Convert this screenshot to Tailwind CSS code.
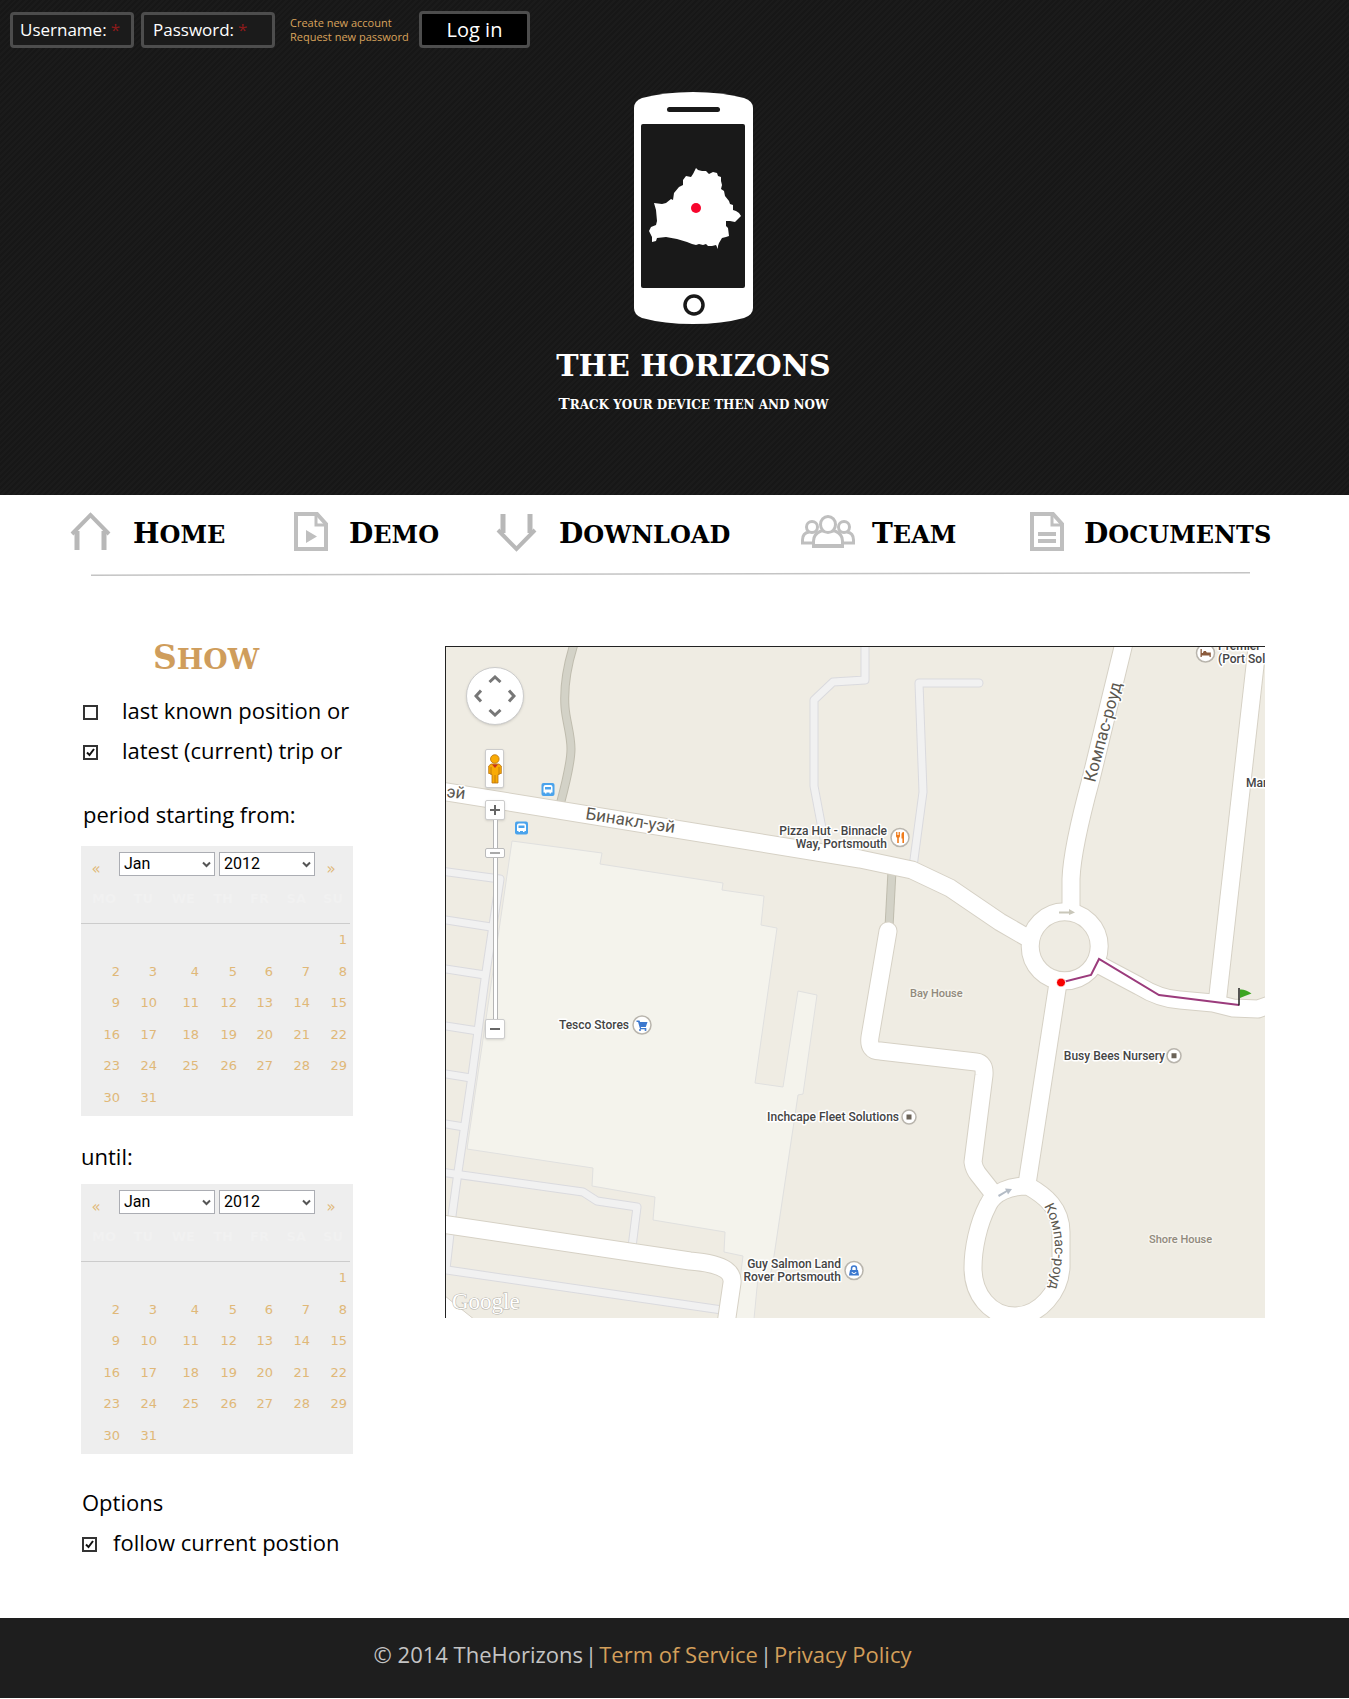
<!DOCTYPE html>
<html lang="en">
<head>
<meta charset="utf-8">
<meta name="viewport" content="width=device-width, initial-scale=1">
<title>The Horizons</title>
<script src="https://cdn.jsdelivr.net/npm/@tailwindcss/browser@4"></script>
</head>
<body class="bg-white font-['Open_Sans',sans-serif] text-black">

<header class="bg-[repeating-linear-gradient(135deg,#171717_0_2px,#1b1b1b_2px_4px)] pb-[78px] pt-[11px] text-white">
  <form class="flex items-center pl-[10px]">
    <label class="flex h-9 w-[124px] items-center gap-1 rounded-[4px] border-3 border-[#4d4d4d] bg-[#1b1b1b] pl-[7px] text-[17px]">Username: <span class="text-[#8c1a1a]">*</span><input type="text" name="user" class="w-0 flex-1 bg-transparent outline-none"></label>
    <label class="ml-[7px] flex h-9 w-[134px] items-center gap-1 rounded-[4px] border-3 border-[#4d4d4d] bg-[#1b1b1b] pl-[9px] text-[17px]">Password: <span class="text-[#8c1a1a]">*</span><input type="password" name="pass" class="w-0 flex-1 bg-transparent outline-none"></label>
    <div class="ml-[15px] flex w-[129px] flex-col text-[11px] leading-[14px] text-[#d9a35c]">
      <a href="#">Create new account</a>
      <a href="#">Request new password</a>
    </div>
    <button type="submit" class="h-[37px] w-[111px] rounded-[4px] border-3 border-[#4d4d4d] bg-black text-[20px] leading-none">Log in</button>
  </form>

  <div class="mt-11 flex flex-col items-center pl-[38px]">
    <svg class="h-[232px] w-[119px]" viewBox="0 0 119 232" aria-label="The Horizons logo" role="img">
      <path fill="#fff" d="M0 16Q0 9 8 6Q30 0 59 0T110 6Q119 9 119 16V216Q119 223 110 226Q88 232 59 232T8 226Q0 223 0 216Z"/>
      <rect x="33" y="15" width="53" height="5" rx="2.5" fill="#191919"/>
      <rect x="7" y="32" width="104" height="164" rx="2" fill="#191919"/>
      <circle cx="60" cy="213" r="9" fill="#fff" stroke="#191919" stroke-width="3.5"/>
      <path fill="#fff" d="M62 76l2 2 4 1 4 0 3 3 4-2 4 1 1 3 3 1 0 4 1 4-1 4 3 2 1 5 4 5 1 3 3 1 0 5 3 1 3 2 2 3-2 2-4 4-5-1-4 0 0 5 2 2 1 8-3 1-4 1-3 5-1 3 0 3-2-4-4 1-4 0-2-2-3 1-4-1-3 1-4-1-5-2-10-3-11-2-9 1-1 3-4 1 0-5-3-6 2-4 5-2 1-4-1-11-2-7 8 1 4-1 5-4 2 1 1-7 5-6 4-2 0-5 3-4 5 1 2-3z"/>
      <circle cx="62" cy="116" r="5" fill="#f7052d"/>
    </svg>
    <h1 class="mt-6 font-['DejaVu_Serif',serif] text-[30px] leading-9 font-bold">THE HORIZONS</h1>
    <p class="mt-2 font-['DejaVu_Serif',serif] text-[12px] leading-6 font-bold uppercase first-letter:text-[15px]">Track your device then and now</p>
  </div>
</header>

<nav class="grid grid-cols-[224fr_202fr_305fr_229fr_249fr] px-[70px] pt-[17px] font-['DejaVu_Serif',serif] text-[24px] leading-8 font-bold uppercase">
  <a href="#" class="flex items-center gap-[21px]">
    <svg class="h-10 w-[42px] shrink-0" viewBox="0 0 42 40" fill="none" stroke="#b8b8b8" stroke-width="5"><path d="M7 38V19M34 38V19"/><path stroke-width="4" d="M2 22L20.500 3L39 22"/></svg><span class="block pt-1 first-letter:text-[28px]">Home</span></a>
  <a href="#" class="flex items-center gap-[21px]">
    <svg class="h-10 w-[34px] shrink-0" viewBox="0 0 34 40"><path fill="none" stroke="#bfbfbf" stroke-width="4" d="M2 2H23L32 12V37H2Z"/><path fill="none" stroke="#bfbfbf" stroke-width="3" d="M22 3V13H32"/><path fill="#bfbfbf" d="M12 18L23 24.500L12 31Z"/></svg><span class="block pt-1 first-letter:text-[28px]">Demo</span></a>
  <a href="#" class="flex items-center gap-[21px]">
    <svg class="h-10 w-[42px] shrink-0" viewBox="0 0 42 40" fill="none" stroke="#b8b8b8" stroke-width="5"><path d="M7 2V21M34 2V21"/><path stroke-width="4" d="M2 18L20.500 37L39 18"/></svg><span class="block pt-1 first-letter:text-[28px]">Download</span></a>
  <a href="#" class="flex items-center gap-[17px]">
    <svg class="h-10 w-[54px] shrink-0" viewBox="0 0 54 40" fill="none" stroke="#bfbfbf" stroke-width="3"><circle cx="11" cy="15" r="5.500"/><circle cx="43" cy="15" r="5.500"/><path d="M12 31H1.500V28Q1.500 21 8 20M42 31H52.500V28Q52.500 21 46 20"/><path fill="#fff" d="M12.500 34V29Q12.500 22 20 19H34Q41.500 22 41.500 29V34Z"/><path stroke-width="4" d="M11 34H43"/><ellipse cx="27" cy="12.500" rx="7.500" ry="8" fill="#fff"/></svg><span class="block pt-1 first-letter:text-[28px]">Team</span></a>
  <a href="#" class="flex items-center gap-[20px]">
    <svg class="h-10 w-[34px] shrink-0" viewBox="0 0 34 40"><path fill="none" stroke="#bfbfbf" stroke-width="4" d="M2 2H23L32 12V37H2Z"/><path fill="none" stroke="#bfbfbf" stroke-width="3" d="M22 3V13H32"/><path stroke="#bfbfbf" stroke-width="4" d="M8 22H26M8 29H26"/></svg><span class="block pt-1 first-letter:text-[28px]">Documents</span></a>
</nav>
<svg class="ml-[91px] mt-5 block h-1 w-[calc(100%-190px)]" viewBox="0 0 1159 4" preserveAspectRatio="none"><path stroke="#c4c4c4" stroke-width="1.500" d="M0 3.200L1159 .8"/></svg>

<main class="flex items-start gap-[92px] pb-14 pl-[81px] pr-[84px] pt-[70px]">
  <form class="w-[272px] shrink-0 text-[22px] leading-10">
    <h2 class="mb-[18px] pl-[72px] font-['DejaVu_Serif',serif] text-[28px] leading-6 font-bold text-[#cf9d5c] uppercase first-letter:text-[33px]">Show</h2>
    <label class="flex items-center gap-6 whitespace-nowrap pl-[2px]">
      <span class="mt-1 grid size-[15px] shrink-0"><input type="checkbox" class="peer col-start-1 row-start-1 size-[15px] appearance-none border-2 border-[#333]"><svg class="col-start-1 row-start-1 hidden size-[15px] peer-checked:block" viewBox="0 0 15 15"><path fill="none" stroke="#111" stroke-width="2" d="M4 7.500L6.500 10L11 4"/></svg></span>last known position or</label>
    <label class="flex items-center gap-6 whitespace-nowrap pl-[2px]">
      <span class="mt-1 grid size-[15px] shrink-0"><input type="checkbox" checked class="peer col-start-1 row-start-1 size-[15px] appearance-none border-2 border-[#333]"><svg class="col-start-1 row-start-1 hidden size-[15px] peer-checked:block" viewBox="0 0 15 15"><path fill="none" stroke="#111" stroke-width="2" d="M4 7.500L6.500 10L11 4"/></svg></span>latest (current) trip or</label>

    <h3 class="mt-6 pl-[2px]">period starting from:</h3>
    <div data-calendar="from" class="mt-3"></div>
    <h3 class="mt-5">until:</h3>
    <div data-calendar="until" class="mt-2"></div>

    <h3 class="mt-7 pl-[1px]">Options</h3>
    <label class="flex items-center gap-4 whitespace-nowrap pl-[1px]">
      <span class="mt-1 grid size-[15px] shrink-0"><input type="checkbox" checked class="peer col-start-1 row-start-1 size-[15px] appearance-none border-2 border-[#333]"><svg class="col-start-1 row-start-1 hidden size-[15px] peer-checked:block" viewBox="0 0 15 15"><path fill="none" stroke="#111" stroke-width="2" d="M4 7.500L6.500 10L11 4"/></svg></span>follow current postion</label>
  </form>

  <section class="relative min-w-0 flex-1 border-l border-t border-[#222]" aria-label="Map">
    <svg class="block h-auto w-full font-[Roboto,sans-serif]" viewBox="446 648 819 671">
      <rect x="445" y="647" width="820" height="672" fill="#efece3"/>
      <!-- store plot -->
      <path fill="#f4f3ec" stroke="#e0e0df" d="M512 842L602 854L600 865L723 884L722 891L764 897L761 926L777 929L755 1084L783 1088L798 992L817 996L803 1095L798 1096L774 1257L770 1278L758 1278L754 1320H735L743 1257L724 1253L725 1233L653 1221L655 1198L592 1187L593 1169L467 1150Z"/>
      <!-- footpaths -->
      <g fill="none" stroke-linejoin="round">
        <g stroke="#bfbcae" stroke-width="9"><path d="M574 645Q563 680 565 708C566 722 571 735 571 750Q571 765 560 806"/><path d="M892 872L889 928"/></g>
        <g stroke="#d3d2c7" stroke-width="7"><path d="M574 645Q563 680 565 708C566 722 571 735 571 750Q571 765 560 806"/><path d="M892 872L889 928"/></g>
      </g>
      <!-- minor roads -->
      <defs>
        <g id="minor" fill="none" stroke-linejoin="round">
          <path d="M440 872L500 880L485 980L472 1077L458 1173L452 1217L446 1270"/>
          <path d="M440 920L491 928M440 969L485 976M440 1026L478 1032M440 1074L471 1079M440 1124L464 1128"/>
          <path d="M440 1173L583 1193L597 1202L637 1208L632 1248M440 1270L722 1311"/>
          <path d="M865 640V681L833 683L814 701V787L824 840"/>
          <path stroke-linecap="round" d="M979 684H919L923 793L913 868"/>
        </g>
        <g id="major" fill="none" stroke-linejoin="round">
          <path d="M435 791L860 860L912 871L950 889L1000 923L1026 938"/>
          <circle cx="1064.700" cy="947.300" r="34.500"/>
          <path d="M1125 640L1091 780Q1072 850 1071 880V912"/>
          <path d="M1258 640L1217 1005"/>
          <path d="M1092 962L1139 987Q1160 1000 1180 1001L1213 1004L1233 1009L1258 1010L1272 1005"/>
          <path d="M1058 984L1027 1185"/>
          <path stroke-linecap="round" d="M888 932L870 1038Q868 1052 880 1052L976 1063Q985 1064 984 1076L973 1163Q974 1170 978 1175L993 1194"/>
          <path d="M1028 1187C1010 1187 994 1193 988 1206C978 1225 973 1250 973 1269C973 1295 990 1317 1015 1317C1040 1317 1060 1292 1061 1268V1233C1061 1210 1046 1197 1028 1187Z"/>
          <path d="M435 1224L690 1262Q716 1264 726 1271Q733 1276 732 1284L726 1325"/>
        </g>
      </defs>
      <use href="#minor" stroke="#dadade" stroke-width="9"/><use href="#minor" stroke="#f1f1f1" stroke-width="7"/>
      <use href="#major" stroke="#d6d1c5" stroke-width="19"/><use href="#major" stroke="#fff" stroke-width="17"/>
      <path fill="#fff" stroke="#d6d1c5" d="M440 1294L445 1297L475 1321H440Z"/>
      <!-- direction arrows -->
      <path fill="#c9c7ba" d="M1059 912.500H1069V910L1075 913.500L1069 916V914.500H1059Z"/>
      <path fill="#b4bcc6" d="M998 1196L1006 1191.500L1005 1189.500L1012 1190L1008 1195.500L1007 1193L999 1198Z"/>
      <!-- street names -->
      <g fill="#5b574f" stroke="#fff" stroke-width="3" stroke-linejoin="round" paint-order="stroke">
        <text font-size="17" transform="translate(585 820) rotate(9)">Бинакл-уэй</text>
        <text font-size="17" transform="translate(446 798) rotate(7)">эй</text>
        <text font-size="17" transform="translate(1095 784) rotate(-75)">Компас-роуд</text>
        <path id="loop-name" fill="none" stroke="none" d="M1044 1207Q1054 1225 1055 1247Q1055 1270 1047 1295"/>
        <text font-size="14"><textPath href="#loop-name">Компас-роуд</textPath></text>
      </g>
      <!-- places -->
      <g fill="#444" stroke="#fff" stroke-width="3" stroke-linejoin="round" paint-order="stroke" font-size="12" font-weight="500">
        <g text-anchor="end">
          <text x="887" y="836">Pizza Hut - Binnacle</text><text x="887" y="849">Way, Portsmouth</text>
          <text x="841" y="1269">Guy Salmon Land</text><text x="841" y="1282">Rover Portsmouth</text>
          <text x="629" y="1030">Tesco Stores</text><text x="899" y="1122">Inchcape Fleet Solutions</text><text x="1165" y="1061">Busy Bees Nursery</text>
        </g>
        <text x="1218" y="651">Premier</text><text x="1218" y="664">(Port Sol</text><text x="1246" y="788">Mar</text>
        <g fill="#918a7d" stroke="#f5f3ec" font-size="11"><text x="910" y="998">Bay House</text><text x="1149" y="1244">Shore House</text></g>
      </g>
      <g fill="#fff" stroke="#b9b5ad" stroke-width="1.500">
        <circle cx="900" cy="838.500" r="9"/><circle cx="642" cy="1026" r="9"/><circle cx="854" cy="1271.500" r="9"/><circle cx="1205.500" cy="654" r="9"/><circle cx="909" cy="1118" r="7"/><circle cx="1174" cy="1056.700" r="7"/>
      </g>
      <path fill="#6b6358" d="M906.500 1115.500h5v5h-5zM1171.500 1054.200h5v5h-5z"/>
      <path fill="#f07c1c" d="M896 833v4q0 1.500 1.200 1.700V844h1.600v-5.300q1.200-.2 1.200-1.700v-4h-.9v3h-.7v-3h-.8v3h-.7v-3zM901.500 835q0-2 2.500-2V844h-1.600v-4.500h-.9z"/>
      <path fill="#3b78cf" d="M636.500 1021.500h3l.6 1.500h7.400l-1.700 5h-5l.3 1h5.200v1.200h-6.200l-2-7.200h-1.600z"/><circle cx="640" cy="1031" r="1" fill="#3b78cf"/><circle cx="645.500" cy="1031" r="1" fill="#3b78cf"/>
      <path fill="#3b78cf" d="M850 1271h8l1 5.500h-10z"/><path fill="none" stroke="#3b78cf" stroke-width="1.500" d="M851.500 1271v-1.500a2.500 2.500 0 015 0v1.500"/><path fill="none" stroke="#fff" d="M852 1273a2 1.500 0 004 0"/>
      <path fill="#8a5a3c" d="M1200.500 650h1.300v4h1l1-2h2l1 1.500h4v4.500h-1.300v-1.500h-7.700v1.500h-1.300z"/>
      <!-- bus stops -->
      <g id="bus"><rect x="541.500" y="784" width="13" height="13" rx="2" fill="#4aa3ec"/><path fill="#fff" d="M543.500 793.500V788q0-2 2-2h5q2 0 2 2v5.500h-1.500v1h-1.500v-1h-3v1H545v-1z"/><path fill="#4aa3ec" d="M545 788h6v2.500h-6z"/></g>
      <use href="#bus" x="-26.500" y="38.500"/>
      <!-- tracked trip -->
      <path fill="none" stroke="#9b3b7c" stroke-width="2" d="M1061 983.500L1091 976L1099 960L1159 996L1239 1006"/>
      <circle cx="1061" cy="983.500" r="4.500" fill="#f80000" stroke="#fff"/>
      <path stroke="#222" stroke-width="1.500" d="M1239 989V1006.500"/><path fill="#3da521" d="M1240 990.500Q1245 990 1251.500 994.500Q1246 996.500 1240 999Z"/>
      <text x="452" y="1310" font-size="23" fill="#fff" stroke="#b5b2aa" stroke-width="1" paint-order="stroke" class="font-['Liberation_Serif',serif]">Google</text>
    </svg>

    <!-- map controls -->
    <div class="absolute left-[20px] top-[20px] grid size-[58px] grid-cols-3 grid-rows-3 place-items-center rounded-full border border-[#ccc] bg-white p-[3px] shadow">
      <button type="button" aria-label="Pan up" class="col-start-2 row-start-1"><svg class="block h-2 w-[14px]" viewBox="0 0 14 8"><path fill="none" stroke="#777" stroke-width="3" d="M1.500 7L7 2L12.500 7"/></svg></button>
      <button type="button" aria-label="Pan left" class="col-start-1 row-start-2"><svg class="block h-[14px] w-2" viewBox="0 0 8 14"><path fill="none" stroke="#777" stroke-width="3" d="M7 1.500L2 7L7 12.500"/></svg></button>
      <button type="button" aria-label="Pan right" class="col-start-3 row-start-2"><svg class="block h-[14px] w-2" viewBox="0 0 8 14"><path fill="none" stroke="#777" stroke-width="3" d="M1 1.500L6 7L1 12.500"/></svg></button>
      <button type="button" aria-label="Pan down" class="col-start-2 row-start-3"><svg class="block h-2 w-[14px]" viewBox="0 0 14 8"><path fill="none" stroke="#777" stroke-width="3" d="M1.500 1L7 6L12.500 1"/></svg></button>
    </div>
    <button type="button" aria-label="Street view" class="absolute left-[39px] top-[102px] flex h-[39px] w-[19px] items-center justify-center rounded-[2px] border border-[#ccc] bg-white shadow-sm">
      <svg class="h-[30px] w-[14px]" viewBox="0 0 14 30"><g fill="#f9ab05" stroke="#b8720f" stroke-width=".8"><path d="M3 10H11L13.300 12V19.500H11.300V20.500H10V29H4V20.500H2.700V19.500H.7V12Z"/><path fill="none" d="M3 13V20M11 13V20M7 21V29"/><circle cx="6.800" cy="5" r="4.300"/></g><path fill="#c8321e" d="M4 10.500H10L7 14Z"/></svg>
    </button>
    <div class="absolute left-[39px] top-[153px] flex w-[20px] flex-col items-center">
      <button type="button" aria-label="Zoom in" class="flex size-5 items-center justify-center rounded-[2px] border border-[#ccc] bg-white shadow-sm"><svg class="size-[10px]" viewBox="0 0 10 10"><path stroke="#666" stroke-width="2" d="M0 5H10M5 0V10"/></svg></button>
      <input type="range" min="0" max="20" value="17" aria-label="Zoom level" class="h-[199px] w-5 appearance-none bg-[linear-gradient(90deg,transparent_8px,#b5b5b5_8px_9px,#fff_9px_12px,#b5b5b5_12px_13px,transparent_13px)] [direction:rtl] [writing-mode:vertical-lr] [&::-webkit-slider-thumb]:h-[10px] [&::-webkit-slider-thumb]:w-[20px] [&::-webkit-slider-thumb]:appearance-none [&::-webkit-slider-thumb]:rounded-[2px] [&::-webkit-slider-thumb]:border [&::-webkit-slider-thumb]:border-[#bbb] [&::-webkit-slider-thumb]:bg-[linear-gradient(#aaa,#aaa)] [&::-webkit-slider-thumb]:bg-[length:10px_2px] [&::-webkit-slider-thumb]:bg-center [&::-webkit-slider-thumb]:bg-no-repeat [&::-webkit-slider-thumb]:bg-white">
      <button type="button" aria-label="Zoom out" class="flex size-5 items-center justify-center rounded-[2px] border border-[#ccc] bg-white shadow-sm"><svg class="size-[10px]" viewBox="0 0 10 10"><path stroke="#666" stroke-width="2" d="M0 5H10"/></svg></button>
    </div>
  </section>
</main>

<footer class="flex h-20 items-center justify-center gap-[2px] bg-[#1e1e1e] pb-[7px] pr-16 text-[22px] text-[#c4c4c4]">
  <span>© 2014 TheHorizons</span><span>|</span><a href="#" class="text-[#d39f5a]">Term of Service</a><span>|</span><a href="#" class="text-[#d39f5a]">Privacy Policy</a>
</footer>

<script>
  const weekdays = ["MO", "TU", "WE", "TH", "FR", "SA", "SU"];
  const columns = [39, 37, 42, 38, 36, 37, 37];
  const picker = (name, label, value) => `
    <span class="relative h-6 w-24">
      <select name="${name}" aria-label="${label}" class="block h-6 w-24 appearance-none border border-[#abadb3] bg-white pl-[4px] font-[Roboto,sans-serif] text-[16px] leading-none text-black"><option>${value}</option></select>
      <svg class="pointer-events-none absolute right-1 top-[9px] h-[7px] w-[9px]" viewBox="0 0 9 7"><path fill="none" stroke="#555" stroke-width="2" d="M1 1.500L4.500 5L8 1.500"/></svg>
    </span>`;
  // January 2012 begins on a Sunday, so the first week holds one day.
  const weeks = Array.from({ length: 6 }, (_, w) =>
    weekdays.map((_, d) => w * 7 + d - 5).map(n => (n > 0 && n < 32 ? n : "")));

  document.querySelectorAll("[data-calendar]").forEach(box => {
    const id = box.dataset.calendar;
    box.innerHTML = `
      <div class="h-[270px] bg-[#eee] pt-[6px] font-['DejaVu_Sans',sans-serif] text-[13px] leading-4 text-[#e0b878]">
        <div class="flex h-6 items-center">
          <button type="button" aria-label="Previous month" class="w-[38px] pr-2 pt-[10px] text-[15px]">«</button>
          ${picker(id + "-month", "Month", "Jan")}
          <span class="w-1"></span>
          ${picker(id + "-year", "Year", "2012")}
          <button type="button" aria-label="Next month" class="w-[32px] pt-[10px] text-[15px]">»</button>
        </div>
        <table class="w-[269px] table-fixed border-collapse text-right">
          <colgroup>${columns.map(w => `<col style="width:${w}px">`).join("")}<col></colgroup>
          <thead><tr class="h-[47px] border-b border-[#ccc] text-[#f1f1f1]">${weekdays.map(d => `<th class="p-0 pr-1 text-right">${d}</th>`).join("")}<td></td></tr></thead>
          <tbody>${weeks.map(w => `<tr class="odd:h-[31px] even:h-8">${w.map(n => `<td class="p-0 pt-[3px]">${n}</td>`).join("")}<td></td></tr>`).join("")}</tbody>
        </table>
      </div>`;
  });
</script>
</body>
</html>
